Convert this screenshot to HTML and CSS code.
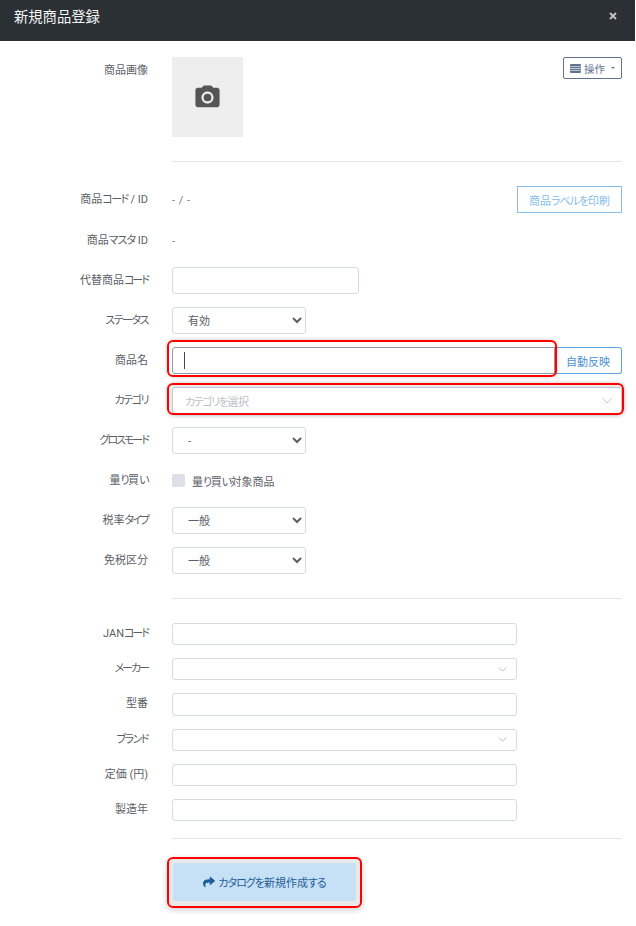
FILE: index.html
```html
<!DOCTYPE html>
<html lang="ja">
<head>
<meta charset="utf-8">
<title>新規商品登録</title>
<link rel="stylesheet" href="styles.css">
</head>
<body>
<div class="modal">
  <header class="head">
    <h1 class="title">新規商品登録</h1>
    <svg class="close" viewBox="0 0 8 8" width="8" height="8"><path d="M1 1l6 6M7 1L1 7" stroke="#c4c6c8" stroke-width="1.8" fill="none"/></svg>
  </header>
  <main class="body">
    <div class="row row-image">
      <div class="label label-top">商品画像</div>
      <div class="image-field">
        <div class="thumb">
          <svg viewBox="0 0 24 24" width="29" height="29" fill="#555"><circle cx="12" cy="12" r="3.2"/><path d="M9 2L7.17 4H4c-1.1 0-2 .9-2 2v12c0 1.1.9 2 2 2h16c1.1 0 2-.9 2-2V6c0-1.1-.9-2-2-2h-3.17L15 2H9zm3 15c-2.76 0-5-2.24-5-5s2.24-5 5-5 5 2.24 5 5-2.24 5-5 5z"/></svg>
        </div>
        <button class="btn-ops" type="button">
          <svg viewBox="0 0 11 9" width="11" height="9" fill="#5f7391"><rect width="11" height="9" rx="1"/><path d="M0 2.6h11M0 4.5h11M0 6.4h11" stroke="#fff" stroke-width=".6"/></svg>
          <span>操作</span><i class="caret-down"></i>
        </button>
      </div>
    </div>
    <hr class="rule rule-first">
    <div class="row row-code">
      <div class="label">商品<span class="kana">コード</span> / ID</div>
      <div class="split">
        <span class="value">- / -</span>
        <button class="btn-print" type="button">商品<span class="kana-soft">ラベルを</span>印刷</button>
      </div>
    </div>
    <div class="row">
      <div class="label">商品<span class="kana-soft">マスタ</span> ID</div>
      <span class="value">-</span>
    </div>
    <div class="row">
      <div class="label">代替商品<span class="kana-tight">コード</span></div>
      <input class="input w-code" type="text">
    </div>
    <div class="row">
      <div class="label"><span class="kana">ステータス</span></div>
      <select class="select"><option>有効</option></select>
    </div>
    <div class="row">
      <div class="label">商品名</div>
      <div class="split-name">
        <div class="mark mark-name">
          <input class="input input-active" type="text">
          <span class="text-caret"></span>
        </div>
        <button class="btn-auto" type="button">自動反映</button>
      </div>
    </div>
    <div class="row">
      <div class="label"><span class="kana">カテゴリ</span></div>
      <div class="mark mark-cat">
        <div class="combo combo-cat">
          <span class="placeholder"><span class="kana">カテゴリを</span>選択</span>
          <svg viewBox="0 0 10 6" width="10" height="6"><path d="M.5.5L5 5 9.5.5" stroke="#c3c8d0" fill="none"/></svg>
        </div>
      </div>
    </div>
    <div class="row">
      <div class="label"><span class="kana-tight">グロスモード</span></div>
      <select class="select"><option>-</option></select>
    </div>
    <div class="row">
      <div class="label">量<span class="kana">り</span>買<span class="kana">い</span></div>
      <label class="check"><span class="box"></span><span>量<span class="kana">り</span>買<span class="kana">い</span>対象商品</span></label>
    </div>
    <div class="row">
      <div class="label">税率<span class="kana-tight">タイプ</span></div>
      <select class="select"><option>一般</option></select>
    </div>
    <div class="row">
      <div class="label">免税区分</div>
      <select class="select"><option>一般</option></select>
    </div>
    <hr class="rule rule-mid">
    <div class="row row-small">
      <div class="label">JAN<span class="kana-tight">コード</span></div>
      <input class="input w-wide" type="text">
    </div>
    <div class="row row-small">
      <div class="label"><span class="kana-tight">メーカー</span></div>
      <div class="combo w-wide">
        <svg viewBox="0 0 10 6" width="9" height="5"><path d="M.5.5L5 5 9.5.5" stroke="#a9afba" fill="none"/></svg>
      </div>
    </div>
    <div class="row row-small">
      <div class="label">型番</div>
      <input class="input w-wide" type="text">
    </div>
    <div class="row row-small">
      <div class="label"><span class="kana">ブランド</span></div>
      <div class="combo w-wide">
        <svg viewBox="0 0 10 6" width="9" height="5"><path d="M.5.5L5 5 9.5.5" stroke="#a9afba" fill="none"/></svg>
      </div>
    </div>
    <div class="row row-small">
      <div class="label">定価 (円)</div>
      <input class="input w-wide" type="text">
    </div>
    <div class="row row-small">
      <div class="label">製造年</div>
      <input class="input w-wide" type="text">
    </div>
    <hr class="rule rule-last">
    <div class="row row-action">
      <div></div>
      <div class="mark mark-action">
        <button class="btn-create" type="button">
          <svg viewBox="0 0 512 512" width="12" height="12" fill="#1f5f99"><path d="M503.691 189.836L327.687 37.851C312.281 24.546 288 35.347 288 56.015v80.053C127.371 137.907 0 170.1 0 322.326c0 61.441 39.581 122.309 83.333 154.132 13.653 9.931 33.111-2.533 28.077-18.631C66.066 312.814 132.917 274.316 288 272.085V360c0 20.7 24.3 31.453 39.687 18.164l176.004-152c11.071-9.562 11.086-26.753 0-36.328z"/></svg>
          <span><span class="kana-soft">カタログを</span>新規作成<span class="kana-soft">する</span></span>
        </button>
      </div>
    </div>
  </main>
</div>
</body>
</html>
```

FILE: styles.css
```css
* { box-sizing: border-box; }

html, body {
  margin: 0;
  background: #fff;
}

body {
  font-family: Roboto, "Noto Sans CJK JP", sans-serif;
  font-size: 11px;
  font-feature-settings: "palt";
  color: #5c6168;
}

.kana-soft { letter-spacing: -1px; }
.kana { letter-spacing: -1.5px; }
.kana-tight { letter-spacing: -2px; }

.modal {
  width: 635px;
}

.head {
  height: 41px;
  background: #2b3035;
  display: flex;
  align-items: center;
  justify-content: space-between;
  padding: 0 18px 9px 14px;
}

.title {
  margin: -2px 0 0;
  font-size: 14.3px;
  font-weight: 400;
  font-feature-settings: normal;
  color: #f4f5f6;
}

.body {
  padding: 16px 13px 0 0;
}

.row {
  display: grid;
  grid-template-columns: 148px 1fr;
  column-gap: 24px;
  align-items: center;
  min-height: 27px;
  margin-bottom: 13px;
}

.row-code {
  margin-bottom: 14px;
}

.label {
  text-align: right;
  color: #5a5f66;
  line-height: 16px;
  padding-top: 1px;
}

.label-top {
  align-self: start;
  padding-top: 6px;
}

.value {
  color: #7d8288;
  word-spacing: 1px;
  padding-top: 1px;
}

.row-image {
  margin-bottom: 24px;
}

.image-field {
  display: flex;
  justify-content: space-between;
  align-items: flex-start;
}

.thumb {
  width: 71px;
  height: 80px;
  background: #eee;
  display: flex;
  align-items: center;
  justify-content: center;
}

.btn-ops {
  width: 59px;
  height: 22px;
  padding: 0;
  background: #fff;
  border: 1px solid #5f7391;
  border-radius: 2px;
  display: flex;
  align-items: center;
  justify-content: center;
  gap: 3px;
  font: inherit;
  font-size: 10.5px;
  font-feature-settings: inherit;
  color: #5f7391;
}

.caret-down {
  width: 0;
  height: 0;
  margin-left: 3px;
  border: 2px solid transparent;
  border-top-color: #5f7391;
  border-bottom: 0;
}

.rule {
  height: 1px;
  border: 0;
  margin: 0 0 24px 172px;
  background: #e6e6e8;
}

.split {
  display: flex;
  justify-content: space-between;
  align-items: center;
}

.btn-print {
  width: 105px;
  height: 27px;
  padding: 0;
  background: #fff;
  border: 1px solid #85bdec;
  font: inherit;
  font-feature-settings: inherit;
  color: #85bdec;
}

.input {
  height: 27px;
  width: 100%;
  padding: 0 12px;
  background: #fff;
  border: 1px solid #d6dae4;
  border-radius: 3px;
  font: inherit;
}

.w-code {
  width: 187px;
}

.w-wide {
  width: 345px;
}

.select {
  width: 134px;
  height: 27px;
  padding: 2px 8px 0 11px;
  background-color: #fff;
  border: 1px solid #d6dae4;
  border-radius: 3px;
  font: inherit;
  font-feature-settings: inherit;
  color: #5c6168;
}

.split-name {
  display: flex;
}

.split-name .mark {
  flex: 1;
}

.mark {
  position: relative;
}

.mark::after {
  content: "";
  position: absolute;
  border: 2px solid #f00;
  border-radius: 6px;
  box-shadow: 0 0 4px rgba(0, 0, 0, .2);
  pointer-events: none;
}

.mark-name::after {
  inset: -7px -2px -3px -5px;
}

.mark-cat::after {
  inset: -4px -2px -1px -5px;
}

.mark-action::after {
  inset: -6px -6px -7px -6px;
  box-shadow: 0 2px 6px rgba(0, 0, 0, .2);
}

.input-active {
  display: block;
  border-color: #8e98a8;
  border-radius: 3px 0 0 3px;
}

.text-caret {
  position: absolute;
  left: 12px;
  top: 5px;
  width: 1px;
  height: 17px;
  background: #444;
}

.btn-auto {
  width: 67px;
  height: 27px;
  padding: 0;
  background: #fff;
  border: 1px solid #5aa5e6;
  border-left: 0;
  border-radius: 0 3px 3px 0;
  font: inherit;
  font-feature-settings: inherit;
  color: #4a90d2;
}

.combo {
  height: 22.2px;
  display: flex;
  align-items: center;
  justify-content: space-between;
  padding: 0 9px 0 12px;
  background: #fff;
  border: 1px solid #d6dae4;
  border-radius: 3px;
}

.combo svg {
  margin-left: auto;
}

.combo-cat {
  height: 27px;
  border-color: #c4c8d0;
  box-shadow: 0 0 6px rgba(0, 0, 0, .22);
}

.placeholder {
  color: #bcc1c8;
}

.check {
  display: flex;
  align-items: center;
  gap: 7px;
  color: #5c6168;
}

.box {
  width: 13px;
  height: 13px;
  background: #dde0e6;
  border-radius: 2px;
}

.rule-mid {
  margin-top: 24px;
}

.row-small {
  min-height: 22.2px;
  margin-bottom: 13px;
}

.row-small .input {
  height: 22.2px;
}

.row-small .label {
  padding-top: 0;
}

.rule-last {
  margin-top: 17px;
}

.btn-create {
  width: 183px;
  height: 38px;
  padding: 0;
  display: flex;
  align-items: center;
  justify-content: center;
  gap: 3px;
  background: #c6e0f5;
  border: 0;
  border-radius: 2px;
  box-shadow: 0 0 0 5px #e9e9e9;
  font: inherit;
  font-size: 11px;
  font-feature-settings: inherit;
  color: #1f5f99;
}

.row-action {
  margin-left: 1px;
}

.mark-action {
  width: 183px;
}
```
